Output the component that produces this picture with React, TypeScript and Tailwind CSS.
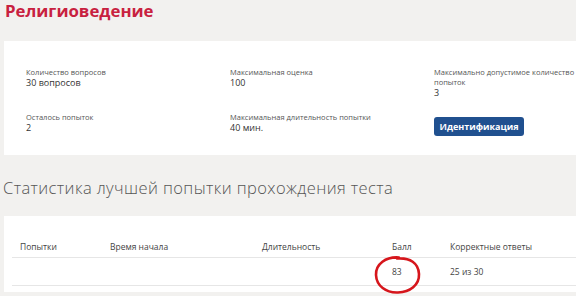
import React from 'react';

const info = [
  { label: 'Количество вопросов', value: '30 вопросов' },
  { label: 'Максимальная оценка', value: '100' },
  { label: 'Максимально допустимое количество попыток', value: '3' },
  { label: 'Осталось попыток', value: '2' },
  { label: 'Максимальная длительность попытки', value: '40 мин.' },
];

function Info({ label, value }: { label: string; value: string }) {
  return (
    <div className="flex flex-col">
      <span className="text-[7.5px] leading-[10px] text-[#555]">{label}</span>
      <span className="text-[9px] leading-[11px] text-[#333]">{value}</span>
    </div>
  );
}

export default function App() {
  return (
    <div className="relative w-[576px] h-[296px] overflow-hidden bg-[#f2f1ef] font-['Open_Sans',sans-serif]">
      <h1 className="pl-[5px] pt-[1px] text-[16.8px] leading-[20px] font-bold text-[#c8213f]">
        Религиоведение
      </h1>

      {/* Карточка с параметрами теста */}
      <div className="ml-[4px] mt-[20px] h-[114px] bg-white pl-[22px] pt-[26px]">
        <div className="grid grid-cols-[204px_204px_170px] grid-rows-[45px_auto]">
          <Info {...info[0]} />
          <Info {...info[1]} />
          <div className="w-[142px]">
            <Info {...info[2]} />
          </div>
          <Info {...info[3]} />
          <Info {...info[4]} />
          <div>
            <button className="-mt-[3px] h-[19px] w-[90px] rounded-[3px] bg-[#20508f] text-[9px] font-bold text-white">
              Идентификация
            </button>
          </div>
        </div>
      </div>

      <h2 className="mt-[23px] pl-[3px] text-[16.5px] leading-[20px] font-light tracking-[0.4px] text-[#555] whitespace-nowrap">
        Статистика лучшей попытки прохождения теста
      </h2>

      {/* Таблица результатов */}
      <div className="ml-[4px] mt-[18px] h-[76px] bg-white pl-[8px] pt-[26px]">
        <div className="grid grid-cols-[90px_152px_130px_58px_1fr] text-[8.5px] leading-[10px] text-[#444]">
          <div className="pl-[8px] pb-[5px] border-b border-[#e6e6e6]">Попытки</div>
          <div className="pl-[8px] pb-[5px] border-b border-[#e6e6e6]">Время начала</div>
          <div className="pl-[8px] pb-[5px] border-b border-[#e6e6e6]">Длительность</div>
          <div className="pl-[8px] pb-[5px] border-b border-[#e6e6e6]">Балл</div>
          <div className="pl-[8px] pb-[5px] border-b border-[#e6e6e6]">Корректные ответы</div>
          <div className="h-[28px] border-b border-[#e6e6e6]" />
          <div className="h-[28px] border-b border-[#e6e6e6]" />
          <div className="h-[28px] border-b border-[#e6e6e6]" />
          <div className="h-[28px] pl-[8px] flex items-center border-b border-[#e6e6e6]">83</div>
          <div className="h-[28px] pl-[8px] flex items-center border-b border-[#e6e6e6]">25 из 30</div>
        </div>
      </div>

      {/* Пометка красным кругом */}
      <svg className="absolute left-[373px] top-[254px]" width="50" height="42" viewBox="0 0 50 42">
        <path
          d="M26 3.5 C13 2.5 2.5 10 3 21 C3.5 32 13 39 25 38.5 C37 38 46.5 31 46 20 C45.5 9 37 3.5 24 4.5"
          fill="none"
          stroke="#d6161c"
          strokeWidth="2.6"
          strokeLinecap="round"
        />
      </svg>
    </div>
  );
}
